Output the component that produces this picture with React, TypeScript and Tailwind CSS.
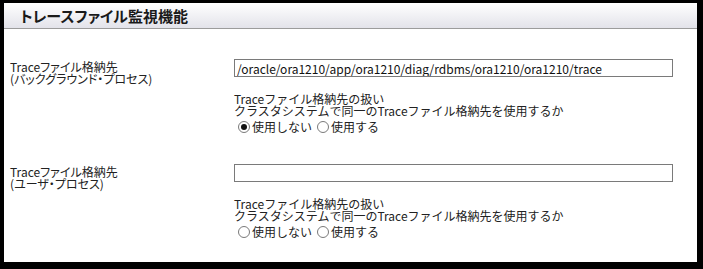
import { useState } from "react";

const font = "font-['Noto_Sans_CJK_JP','Noto_Sans',sans-serif]";

function Radio({ checked, label, onClick }: { checked: boolean; label: string; onClick: () => void }) {
  return (
    <label onClick={onClick} className="flex items-center gap-[2px] cursor-pointer">
      <span className="w-[12px] h-[12px] rounded-full border border-[#7a7a7a] bg-white flex items-center justify-center">
        {checked && <span className="w-[6px] h-[6px] rounded-full bg-[#111]" />}
      </span>
      <span>{label}</span>
    </label>
  );
}

function TraceRow({ title, sub, path, initial }: { title: string; sub: string; path: string; initial: string }) {
  const [mode, setMode] = useState(initial);
  return (
    <div className="flex">
      <div className="w-[230px] pl-[6px] pt-[2px] leading-[12px] [font-feature-settings:'palt']">
        <div>{title}</div>
        <div>{sub}</div>
      </div>
      <div className="flex flex-col">
        <input
          type="text"
          defaultValue={path}
          className="w-[439px] h-[18px] border border-[#7a7a7a] px-[2px] text-[12px] leading-[16px] text-[#111] outline-none"
        />
        <div className="mt-[16px] leading-[12px]">
          <div>Traceファイル格納先の扱い</div>
          <div>クラスタシステムで同一のTraceファイル格納先を使用するか</div>
        </div>
        <div className="mt-[2px] h-[16px] pl-[4px] flex items-center gap-[5px]">
          <Radio checked={mode === "off"} label="使用しない" onClick={() => setMode("off")} />
          <Radio checked={mode === "on"} label="使用する" onClick={() => setMode("on")} />
        </div>
      </div>
    </div>
  );
}

export default function App() {
  return (
    <div className={`w-[703px] h-[269px] bg-white border-t-[3px] border-l-[4px] border-r-[6px] border-b-[7px] border-black text-[12px] text-[#222] ${font}`}>
      {/* ヘッダー */}
      <div className="h-[26px] bg-gradient-to-b from-white to-[#e3e3ea] border-b border-[#9c9c9c] flex items-center pl-[16px]">
        <span className="text-[15px] leading-[18px] font-bold text-[#1a1a1a] [font-feature-settings:'palt']">トレースファイル監視機能</span>
      </div>

      <div className="pt-[30px] flex flex-col gap-[29px]">
        <TraceRow
          title="Traceファイル格納先"
          sub="(バックグラウンド・プロセス)"
          path="/oracle/ora1210/app/ora1210/diag/rdbms/ora1210/ora1210/trace"
          initial="off"
        />
        <TraceRow title="Traceファイル格納先" sub="(ユーザ・プロセス)" path="" initial="" />
      </div>
    </div>
  );
}
